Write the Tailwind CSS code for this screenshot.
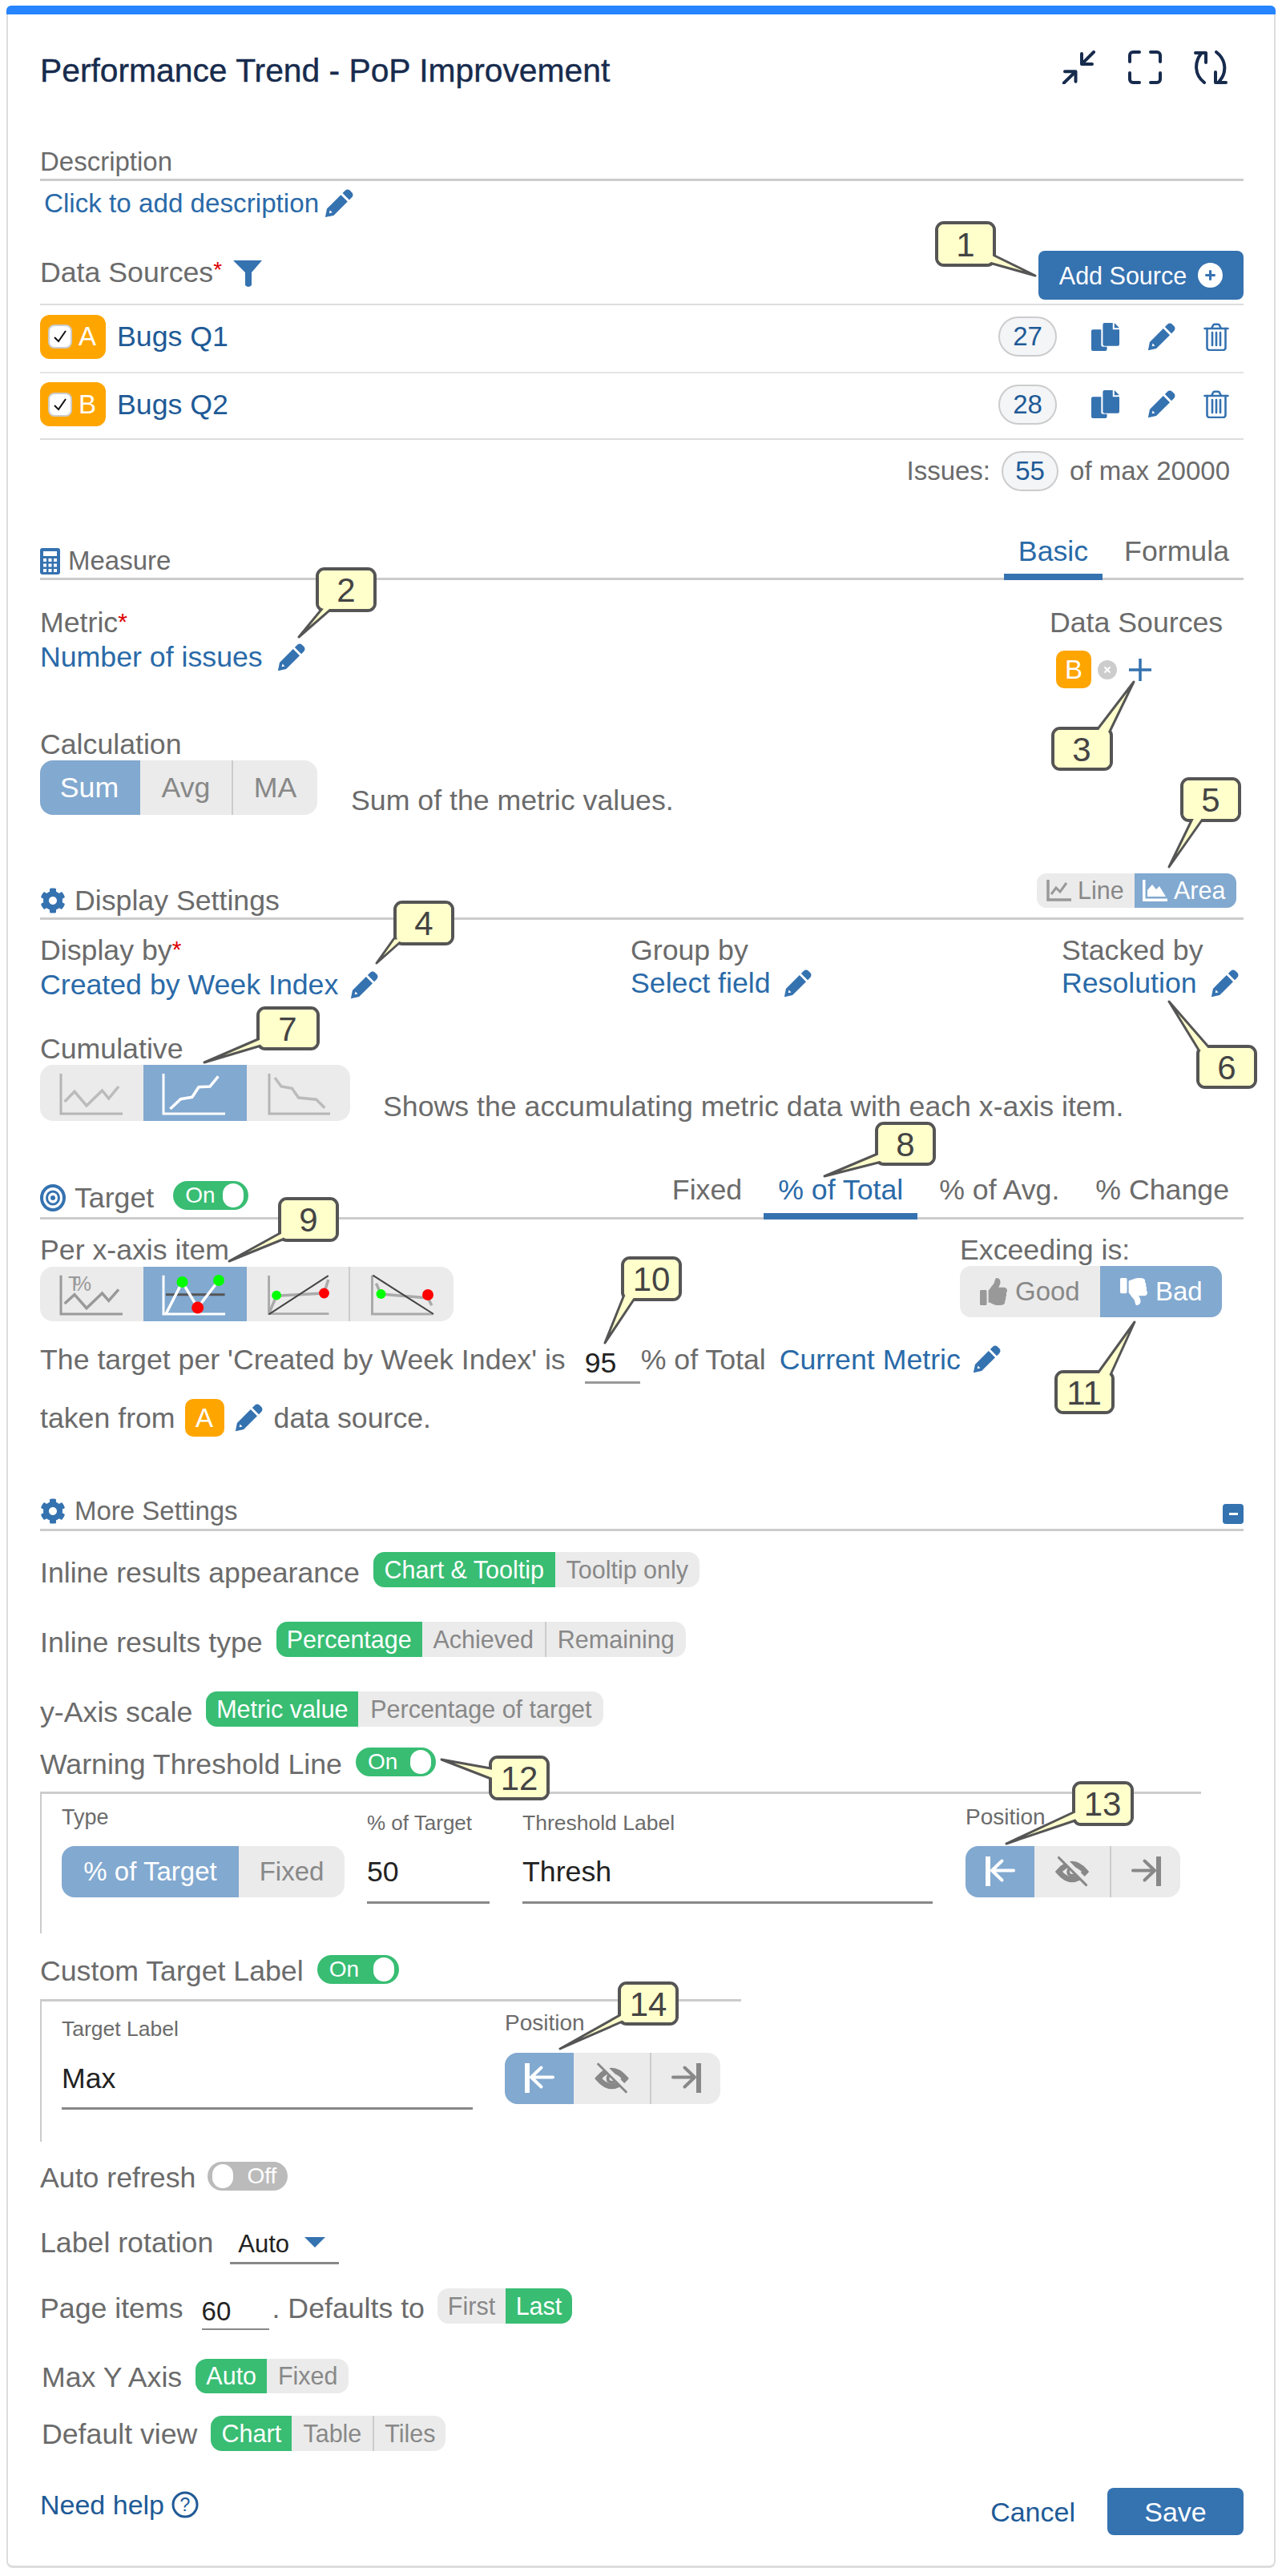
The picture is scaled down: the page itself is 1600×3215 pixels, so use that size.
<!DOCTYPE html>
<html>
<head>
    <title>Performance Trend - PoP Improvement</title>
    <script src="https://cdn.jsdelivr.net/npm/@tailwindcss/browser@4"></script>
</head>
<body class="bg-white [font-family:'Liberation_Sans',Arial,sans-serif] text-[35.7px] leading-[36px] text-[#6b6b6b]">

<!-- shared icons -->
<svg class="hidden">
    <symbol id="pencil" viewBox="0 0 24 24"><path d="M17.2 1.2a2.8 2.8 0 0 1 4 0l1.6 1.6a2.8 2.8 0 0 1 0 4l-2.2 2.2-5.6-5.6z"/><path fill-rule="evenodd" d="M13.6 4.8l5.6 5.6L7.6 22 .6 23.4 2 16.4zM3.9 20.1l2.6-.6-2-2z"/></symbol>
    <symbol id="copy" viewBox="0 0 34 34"><path d="M2 8h10v19a2 2 0 0 0 2 2h5v3a2 2 0 0 1-2 2H2a2 2 0 0 1-2-2V10a2 2 0 0 1 2-2z"/><path d="M16 0h10v8h8v18a2 2 0 0 1-2 2H16a2 2 0 0 1-2-2V2a2 2 0 0 1 2-2z"/><path d="M28 0l6 6h-6z"/></symbol>
    <symbol id="trash" viewBox="0 0 32 35"><g fill="none" stroke="currentColor" stroke-width="2.6" stroke-linecap="round"><path d="M1.5 7h29M10 7l2-4a2 2 0 0 1 2-1.300h4a2 2 0 0 1 2 1.300l2 4"/><path d="M4.500 7v24a3 3 0 0 0 3 3h17a3 3 0 0 0 3-3V7"/><path d="M11 12v16M16 12v16M21 12v16"/></g></symbol>
    <symbol id="cog" viewBox="0 0 512 512"><path d="M487.400 315.700l-42.600-24.600c4.300-23.200 4.300-47 0-70.200l42.600-24.600c4.900-2.800 7.100-8.600 5.500-14-11.100-35.600-30-67.800-54.700-94.600-3.800-4.100-10-5.100-14.800-2.300L380.800 110c-17.900-15.400-38.500-27.300-60.800-35.100V25.800c0-5.600-3.900-10.500-9.400-11.700-36.700-8.200-74.300-7.800-109.200 0-5.500 1.200-9.400 6.100-9.400 11.700V75c-22.200 7.900-42.800 19.800-60.800 35.100L88.700 85.500c-4.900-2.800-11-1.900-14.800 2.300-24.700 26.700-43.600 58.900-54.700 94.600-1.700 5.400.6 11.200 5.500 14L67.300 221c-4.300 23.200-4.300 47 0 70.200l-42.600 24.600c-4.900 2.800-7.100 8.600-5.500 14 11.100 35.600 30 67.800 54.700 94.600 3.800 4.100 10 5.100 14.800 2.300l42.600-24.600c17.900 15.400 38.500 27.300 60.800 35.100v49.200c0 5.600 3.900 10.500 9.400 11.700 36.700 8.200 74.300 7.800 109.200 0 5.500-1.200 9.400-6.100 9.400-11.700v-49.200c22.200-7.900 42.800-19.800 60.800-35.100l42.600 24.600c4.900 2.800 11 1.900 14.800-2.300 24.700-26.700 43.600-58.900 54.700-94.600 1.500-5.500-.7-11.300-5.600-14.100zM256 336c-44.100 0-80-35.900-80-80s35.900-80 80-80 80 35.900 80 80-35.900 80-80 80z"/></symbol>
    <symbol id="thumb" viewBox="0 0 512 512"><path d="M104 224H24c-13.255 0-24 10.745-24 24v240c0 13.255 10.745 24 24 24h80c13.255 0 24-10.745 24-24V248c0-13.255-10.745-24-24-24zM384 81.452c0 42.416-25.970 66.208-33.277 94.548h101.723c33.397 0 59.397 27.746 59.553 58.098.084 17.938-7.546 37.249-19.439 49.197l-.11.11c9.836 23.337 8.237 56.037-9.308 79.469 8.681 25.895-.069 57.704-16.382 74.757 4.298 17.598 2.244 32.575-6.148 44.632C440.202 511.587 389.616 512 346.839 512l-2.845-.001c-48.287-.017-87.806-17.598-119.560-31.725-15.957-7.099-36.821-15.887-52.651-16.178-6.540-.12-11.783-5.457-11.783-11.998v-213.770c0-3.200 1.282-6.271 3.558-8.521 39.614-39.144 56.648-80.587 89.117-113.111 14.804-14.832 20.188-37.236 25.393-58.902C282.515 39.293 291.817 0 312 0c24 0 72 8 72 81.452z"/></symbol>
    <symbol id="pos-left" viewBox="0 0 86 64"><path d="M28 13v37" stroke-width="6"/><path d="M60 30.500H33M45.500 18.500L33 30.500l12.500 12" stroke-width="4" stroke-linecap="round" stroke-linejoin="round" fill="none"/></symbol>
    <symbol id="pos-eye" viewBox="0 0 96 64"><path d="M31 32Q48 12 65 32 48 52 31 32Z" fill="none" stroke-width="7"/><circle cx="48" cy="32" r="5" stroke-width="4" fill="none"/><path d="M33 12l35 35" stroke="#ebebeb" stroke-width="7"/><path d="M31 14l35 35" stroke-width="3" stroke-linecap="round"/></symbol>
    <symbol id="pos-right" viewBox="0 0 86 64"><path d="M59 13v37" stroke-width="6"/><path d="M27 30.500h27M41.500 18.500L54 30.500l-12.500 12" stroke-width="4" stroke-linecap="round" stroke-linejoin="round" fill="none"/></symbol>
</svg>

<div class="relative ml-2 mt-[7px] w-[1584px] h-[3198px] rounded-[8px] border-x-2 border-b-[3px] border-[#ddd]">
    <div class="h-[11px] -mx-[2px] rounded-t-[6px] bg-[#2684ff]"></div>

    <div class="pl-[40px] pr-[38px]">
        <!-- Header -->
        <div class="flex h-[140px] items-center justify-between">
            <h1 class="text-[40.8px] leading-[48px] text-[#172b4d] [-webkit-text-stroke:0.4px_#172b4d]">Performance Trend - PoP Improvement</h1>
            <div class="mb-2 mr-[20px] flex gap-[40px] text-[#172b4d]">
                <svg class="h-[42px] w-[42px]" viewBox="0 0 42 42" fill="none" stroke="currentColor" stroke-width="4" stroke-linecap="round" stroke-linejoin="round"><path d="M39 2L25.600 15.300M24 4v13h13M1.300 41L15.700 27M3 26.300h13.500v12.400"/></svg>
                <svg class="h-[42px] w-[42px]" viewBox="0 0 42 42" fill="none" stroke="currentColor" stroke-width="4" stroke-linecap="round" stroke-linejoin="round"><path d="M2 14V6a4 4 0 0 1 4-4h8M28 2h8a4 4 0 0 1 4 4v8M40 28v8a4 4 0 0 1-4 4h-8M14 40H6a4 4 0 0 1-4-4v-8"/></svg>
                <svg class="h-[42px] w-[42px]" viewBox="0 0 42 42" fill="none" stroke="currentColor" stroke-width="4" stroke-linecap="round" stroke-linejoin="round"><path d="M13 40C0 30 1 14 9 4M2 3h13v12M28 2c13 10 13 26 4 36M27 27v13h13"/></svg>
            </div>
        </div>

        <!-- Description -->
        <div class="flex h-[68px] items-end border-b-[3px] border-[#ccc] text-[33px] leading-[42px]">Description</div>
        <div class="flex h-[56px] items-center gap-[7px] pl-[5px] text-[33.200px] text-[#2a6aa8]">
            <span>Click to add description</span>
            <svg class="h-[36px] w-[36px] fill-[#3572b0]"><use href="#pencil"/></svg>
        </div>

        <!-- Data sources -->
        <div class="flex h-[99px] items-end justify-between border-b-2 border-[#ddd] pb-[5px]">
            <div class="mb-[13px] flex items-center gap-[14px]">
                <span>Data Sources<span class="relative -top-[6px] text-[#d00] text-[28px]">*</span></span>
                <svg class="h-[34px] w-[36px] fill-[#3572b0]" viewBox="0 0 36 34"><path d="M0 0h36L23 15v16q-4 4-8 0V15z"/></svg>
            </div>
            <button class="flex h-[61px] w-[256px] items-center justify-center gap-[14px] rounded-[8px] bg-[#3572b0] text-[30.500px] text-white">
                Add Source
                <svg class="h-[31px] w-[31px]" viewBox="0 0 30 30"><circle cx="15" cy="15" r="15" fill="#fff"/><path d="M15 9v12M9 15h12" stroke="#3572b0" stroke-width="3"/></svg>
            </button>
        </div>
        <div class="flex h-[85px] items-center border-b-2 border-[#e5e5e5] pb-[5px]">
            <div class="flex h-[55px] w-[82px] items-center gap-[8px] rounded-[12px] bg-[#ffa500] pl-[10px] text-[33px] text-white">
                <span class="flex h-[30px] w-[30px] items-center justify-center rounded-[8px] border-2 border-[#ccc] bg-white"><svg class="h-[20px] w-[20px]" viewBox="0 0 20 20" fill="none" stroke="#111" stroke-width="2"><path d="M3 11l5 5 9-13"/></svg></span>A
            </div>
            <span class="ml-[14px] text-[#205a96]">Bugs Q1</span>
            <span class="ml-auto flex h-[50px] w-[73px] items-center justify-center rounded-full border-2 border-[#ccc] bg-[#f4f5f7] text-[33px] text-[#205a96]">27</span>
            <svg class="ml-[43px] h-[35px] w-[35px] fill-[#3572b0]"><use href="#copy"/></svg>
            <svg class="ml-[35px] h-[35px] w-[35px] fill-[#3572b0]"><use href="#pencil"/></svg>
            <svg class="ml-[35px] mr-[18px] h-[35px] w-[32px] text-[#3572b0]"><use href="#trash"/></svg>
        </div>
        <div class="flex h-[83px] items-center border-b-2 border-[#ddd] pb-[4px]">
            <div class="flex h-[55px] w-[82px] items-center gap-[8px] rounded-[12px] bg-[#ffa500] pl-[10px] text-[33px] text-white">
                <span class="flex h-[30px] w-[30px] items-center justify-center rounded-[8px] border-2 border-[#ccc] bg-white"><svg class="h-[20px] w-[20px]" viewBox="0 0 20 20" fill="none" stroke="#111" stroke-width="2"><path d="M3 11l5 5 9-13"/></svg></span>B
            </div>
            <span class="ml-[14px] text-[#205a96]">Bugs Q2</span>
            <span class="ml-auto flex h-[50px] w-[73px] items-center justify-center rounded-full border-2 border-[#ccc] bg-[#f4f5f7] text-[33px] text-[#205a96]">28</span>
            <svg class="ml-[43px] h-[35px] w-[35px] fill-[#3572b0]"><use href="#copy"/></svg>
            <svg class="ml-[35px] h-[35px] w-[35px] fill-[#3572b0]"><use href="#pencil"/></svg>
            <svg class="ml-[35px] mr-[18px] h-[35px] w-[32px] text-[#3572b0]"><use href="#trash"/></svg>
        </div>
        <div class="flex h-[78px] items-center justify-end pr-[17px] text-[33px]">
            Issues:
            <span class="mx-[14px] flex h-[50px] w-[71px] items-center justify-center rounded-full border-2 border-[#ccc] bg-[#f4f5f7] text-[#205a96]">55</span>
            of max 20000
        </div>

        <!-- Measure -->
        <div class="flex h-[97px] items-end justify-between border-b-[3px] border-[#ccc]">
            <div class="mb-[3px] flex items-center gap-[10px] text-[33px]">
                <svg class="h-[33px] w-[25px]" viewBox="0 0 25 33"><rect width="25" height="33" rx="3" fill="#3572b0"/><rect x="4" y="4" width="17" height="6" fill="#fff"/><path d="M4 13h4v4H4zM10.500 13h4v4h-4zM17 13h4v4h-4zM4 19.500h4v4H4zM10.500 19.500h4v4h-4zM17 19.500h4v4h-4zM4 26h4v4H4zM10.500 26h4v4h-4zM17 26h4v4h-4z" fill="#fff"/></svg>
                Measure
            </div>
            <div class="-mb-[3px] flex gap-[9px]">
                <span class="h-[56px] border-b-8 border-[#3572b0] px-[18px] leading-[40px] text-[#2a6aa8]">Basic</span>
                <span class="h-[56px] px-[18px] leading-[40px]">Formula</span>
            </div>
        </div>
        <div class="flex h-[187px] justify-between pt-[35px]">
            <div>
                <div>Metric<span class="relative -top-[3px] text-[30px] text-[#d00]">*</span></div>
                <div class="mt-[5px] flex items-center gap-[18px] text-[#2a6aa8]">Number of issues <svg class="h-[35px] w-[35px] fill-[#3572b0]"><use href="#pencil"/></svg></div>
            </div>
            <div class="w-[242px]">
                <div>Data Sources</div>
                <div class="mt-[17px] flex items-center pl-[8px]">
                    <span class="flex h-[47px] w-[44px] items-center justify-center rounded-[10px] bg-[#ffa500] text-[33px] text-white">B</span>
                    <svg class="ml-[8px] h-[24px] w-[24px]" viewBox="0 0 24 24"><circle cx="12" cy="12" r="12" fill="#ccc"/><path d="M8.500 8.500l7 7M15.500 8.500l-7 7" stroke="#fff" stroke-width="2"/></svg>
                    <svg class="ml-[14px] h-[30px] w-[30px]" viewBox="0 0 30 30"><path d="M15 1v28M1 15h28" stroke="#3572b0" stroke-width="3.500"/></svg>
                </div>
            </div>
        </div>
        <div class="h-[38px]">Calculation</div>
        <div class="flex items-end">
            <div class="flex h-[68px] overflow-hidden rounded-[16px] bg-[#ebebeb] leading-[68px] text-[#888]">
                <span class="w-[125px] bg-[#82a9d0] pr-[2px] text-center text-white">Sum</span>
                <span class="w-[116px] border-r-2 border-[#ccc] text-center">Avg</span>
                <span class="w-[105px] text-center">MA</span>
            </div>
            <span class="ml-[42px]">Sum of the metric values.</span>
        </div>

        <!-- Display settings -->
        <div class="flex h-[131px] items-end justify-between border-b-[3px] border-[#ccc]">
            <div class="mb-[3px] flex items-center gap-[11px]">
                <svg class="h-[34px] w-[32px] fill-[#3572b0]"><use href="#cog"/></svg>
                Display Settings
            </div>
            <div class="mb-[12px] mr-[9px] flex h-[43px] overflow-hidden rounded-[12px] bg-[#ebebeb] text-[30.500px] leading-[43px] text-[#888]">
                <span class="flex w-[122px] items-center gap-[8px] pl-[12px]">
                    <svg class="h-[27px] w-[31px]" viewBox="0 0 31 27" fill="none" stroke="#999"><path d="M2 0v25h29" stroke-width="3.500"/><path d="M6 18l6-8 5 5 8-11" stroke-width="3"/></svg>Line
                </span>
                <span class="flex w-[127px] items-center gap-[8px] bg-[#82a9d0] pl-[10px] text-white">
                    <svg class="h-[27px] w-[31px]" viewBox="0 0 31 27" fill="#fff"><path d="M0 0h3.500v23.500H31V27H0z"/><path d="M6 21V13l6-7 5 6 4-4 8 13z"/></svg>Area
                </span>
            </div>
        </div>
        <div class="grid h-[143px] grid-cols-[737px_538px_1fr] pt-[20px]">
            <div>
                <div>Display by<span class="relative -top-[3px] text-[30px] text-[#d00]">*</span></div>
                <div class="mt-[5px] flex items-center gap-[15px] text-[#2a6aa8]">Created by Week Index <svg class="h-[35px] w-[35px] fill-[#3572b0]"><use href="#pencil"/></svg></div>
            </div>
            <div>
                <div>Group by</div>
                <div class="mt-[5px] flex items-center gap-[16px] text-[#2a6aa8]">Select field <svg class="h-[35px] w-[35px] fill-[#3572b0]"><use href="#pencil"/></svg></div>
            </div>
            <div>
                <div>Stacked by</div>
                <div class="mt-[5px] flex items-center gap-[17px] text-[#2a6aa8]">Resolution <svg class="h-[35px] w-[35px] fill-[#3572b0]"><use href="#pencil"/></svg></div>
            </div>
        </div>
        <div class="h-[38px]">Cumulative</div>
        <div class="flex items-end">
            <div class="flex h-[70px] overflow-hidden rounded-[16px] bg-[#ebebeb]">
                <svg class="h-[70px] w-[129px]" viewBox="0 0 129 70" fill="none" stroke="#bbb" stroke-width="3"><path d="M26 11v50h77" stroke="#b5b5b5"/><path d="M30.600 46L43 33.300 58 51 77.500 32 85.700 42 98 27" stroke-width="3.500"/></svg>
                <svg class="h-[70px] w-[129px] bg-[#82a9d0]" viewBox="0 0 129 70" fill="none" stroke="#fff" stroke-width="3"><path d="M25 11v50h77"/><path d="M33.400 55L46.500 42.700 60.800 40.300 69 27.700 83 27 93.400 14.300" stroke-width="3.500"/></svg>
                <svg class="h-[70px] w-[129px]" viewBox="0 0 129 70" fill="none" stroke="#bbb" stroke-width="3"><path d="M28 11v50h76" stroke="#b5b5b5"/><path d="M35 16L43 27 56.400 29.300 64.600 41 86.700 43.300 97.300 53.700" stroke-width="3.500"/></svg>
            </div>
            <span class="ml-[41px]">Shows the accumulating metric data with each x-axis item.</span>
        </div>

        <!-- Target -->
        <div class="flex h-[123px] items-end justify-between border-b-[3px] border-[#ccc]">
            <div class="mb-[4px] flex items-center">
                <svg class="h-[34px] w-[32px]" viewBox="0 0 32 34" fill="none" stroke="#3572b0"><ellipse cx="16" cy="17" rx="14" ry="15" stroke-width="4"/><ellipse cx="16" cy="17" rx="7.500" ry="8" stroke-width="3"/><circle cx="16" cy="17" r="3" fill="#3572b0" stroke="none"/></svg>
                <span class="ml-[11px]">Target</span>
                <span class="relative mb-[5px] ml-[24px] flex h-[36px] w-[94px] items-center rounded-full bg-[#38bd73] pl-[15px] text-[28px] text-white">On<span class="absolute right-[6px] top-[3px] h-[30px] w-[26px] rounded-full bg-white"></span></span>
            </div>
            <div class="-mb-[3px] flex gap-[9px]">
                <span class="h-[55px] px-[18px]">Fixed</span>
                <span class="h-[55px] border-b-8 border-[#3572b0] px-[18px] text-[#2a6aa8]">% of Total</span>
                <span class="h-[55px] px-[18px]">% of Avg.</span>
                <span class="h-[55px] px-[18px]">% Change</span>
            </div>
        </div>
        <div class="flex justify-between pt-[20px] pr-[27px]">
            <div>
                <div>Per x-axis item</div>
                <div class="mt-[3px] flex h-[68px] overflow-hidden rounded-[16px] bg-[#ebebeb]">
                    <svg class="h-[68px] w-[129px]" viewBox="0 0 129 68" fill="none" stroke="#999" stroke-width="3"><path d="M26 10.700V59h77"/><text x="35" y="30" font-size="25" fill="#999" stroke="none" textLength="29" font-family="Liberation Sans">T%</text><path d="M30.600 46L43 34.700 58 51.700 77.500 33 85.700 42.300 98 28.300" stroke-width="3.500"/></svg>
                    <svg class="h-[68px] w-[129px] bg-[#82a9d0]" viewBox="0 0 129 68" fill="none" stroke="#fff" stroke-width="3"><path d="M25 10.700V59h77"/><path d="M28 34.700h73.600" stroke="#555"/><path d="M28 59L48.500 19 67.700 51 94 17" stroke-width="3.500"/><circle cx="48.500" cy="19" r="7" fill="#0f0" stroke="none"/><circle cx="94" cy="17" r="7" fill="#0f0" stroke="none"/><circle cx="67.700" cy="51" r="7.500" fill="#f00" stroke="none"/></svg>
                    <svg class="h-[68px] w-[129px] border-r-2 border-[#ccc]" viewBox="0 0 129 68" fill="none" stroke="#aaa" stroke-width="3"><path d="M28 10.700V59h76"/><path d="M28.700 57.300L37.700 36.300 98 33 103.400 15.700" stroke-width="3.500"/><path d="M28 59.700L103.400 10.700" stroke="#444" stroke-width="2"/><circle cx="37.700" cy="35.700" r="6" fill="#0f0" stroke="none"/><circle cx="98" cy="33" r="6.500" fill="#f00" stroke="none"/></svg>
                    <svg class="h-[68px] w-[129px]" viewBox="0 0 129 68" fill="none" stroke="#aaa" stroke-width="3"><path d="M27.500 10.700V59h76"/><path d="M32.400 20.700L38.500 34 97 39 101.800 48.300" stroke-width="3.500"/><path d="M28.300 10.700L104 59" stroke="#444" stroke-width="2"/><circle cx="38.500" cy="34" r="6" fill="#0f0" stroke="none"/><circle cx="97" cy="35" r="7" fill="#f00" stroke="none"/></svg>
                </div>
            </div>
            <div class="w-[327px]">
                <div>Exceeding is:</div>
                <div class="mt-[2px] flex h-[64px] overflow-hidden rounded-[14px] bg-[#ebebeb] text-[33px] text-[#888]">
                    <span class="flex w-[175px] items-center gap-[10px] pl-[25px]"><svg class="h-[34px] w-[34px] fill-[#999]"><use href="#thumb"/></svg>Good</span>
                    <span class="flex w-[152px] items-center gap-[10px] bg-[#82a9d0] pl-[25px] text-white"><svg class="h-[34px] w-[34px] -scale-y-100 fill-white"><use href="#thumb"/></svg>Bad</span>
                </div>
            </div>
        </div>
        <div class="flex h-[97px] items-start pt-[30px]">
            <span>The target per 'Created by Week Index' is</span>
            <input value="95" class="ml-[24px] h-[48px] w-[69px] border-b-[3px] border-[#999] leading-[44px] text-[#222] outline-none">
            <span class="ml-[1px]">% of Total</span>
            <span class="ml-[17px] text-[#2a6aa8]">Current Metric</span>
            <svg class="ml-[15px] h-[35px] w-[35px] fill-[#3572b0]"><use href="#pencil"/></svg>
        </div>
        <div class="flex h-[47px] items-center">
            <span>taken from</span>
            <span class="ml-[12px] flex h-[47px] w-[49px] items-center justify-center rounded-[10px] bg-[#ffa500] text-[33px] text-white">A</span>
            <svg class="ml-[13px] h-[35px] w-[35px] fill-[#3572b0]"><use href="#pencil"/></svg>
            <span class="ml-[14px]">data source.</span>
        </div>

        <!-- More settings -->
        <div class="flex h-[118px] items-end justify-between border-b-[3px] border-[#ccc]">
            <div class="mb-[4px] flex items-center gap-[11px] text-[33px]">
                <svg class="h-[34px] w-[32px] fill-[#3572b0]"><use href="#cog"/></svg>
                More Settings
            </div>
            <span class="mb-[6px] flex h-[25px] w-[26px] items-center justify-center rounded-[4px] bg-[#3572b0]"><span class="h-[3px] w-[11px] bg-white"></span></span>
        </div>
        <div class="mt-[26px] flex items-end gap-[17px]">
            <span>Inline results appearance</span>
            <div class="flex h-[44px] overflow-hidden rounded-[14px] bg-[#ebebeb] text-[30.500px] leading-[44px] text-[#888]">
                <span class="w-[227px] bg-[#38bd73] text-center text-white">Chart &amp; Tooltip</span>
                <span class="w-[180px] text-center">Tooltip only</span>
            </div>
        </div>
        <div class="mt-[43px] flex items-end gap-[17px]">
            <span>Inline results type</span>
            <div class="flex h-[44px] overflow-hidden rounded-[14px] bg-[#ebebeb] text-[30.500px] leading-[44px] text-[#888]">
                <span class="w-[182px] bg-[#38bd73] text-center text-white">Percentage</span>
                <span class="w-[155px] border-r-2 border-[#ccc] text-center">Achieved</span>
                <span class="w-[174px] text-center">Remaining</span>
            </div>
        </div>
        <div class="mt-[43px] flex items-end gap-[17px]">
            <span>y-Axis scale</span>
            <div class="flex h-[44px] overflow-hidden rounded-[14px] bg-[#ebebeb] text-[30.500px] leading-[44px] text-[#888]">
                <span class="w-[190px] bg-[#38bd73] text-center text-white">Metric value</span>
                <span class="w-[306px] text-center">Percentage of target</span>
            </div>
        </div>

        <!-- Warning threshold -->
        <div class="mt-[26px] flex h-[55px] items-start gap-[17px]">
            <span class="mt-[3px]">Warning Threshold Line</span>
            <span class="relative flex h-[36px] w-[100px] items-center rounded-full bg-[#38bd73] pl-[15px] text-[28px] text-white">On<span class="absolute right-[6px] top-[3px] h-[30px] w-[26px] rounded-full bg-white"></span></span>
        </div>
        <div class="flex h-[177px] w-[1449px] gap-[28px] border-l-2 border-t-[3px] border-[#ccc] pl-[25px]">
            <div class="w-[353px]">
                <div class="h-[65px] pt-[13px] text-[27px] leading-[32px]">Type</div>
                <div class="flex h-[64px] overflow-hidden rounded-[16px] bg-[#ebebeb] text-[33px] leading-[64px] text-[#888]">
                    <span class="w-[221px] bg-[#82a9d0] text-center text-white">% of Target</span>
                    <span class="w-[132px] text-center">Fixed</span>
                </div>
            </div>
            <div class="w-[153px]">
                <div class="h-[65px] pt-[20px] text-[26px] leading-[32px]">% of Target</div>
                <input value="50" class="h-[72px] w-full border-b-[3px] border-[#888] pb-[4px] leading-[64px] text-[#222] outline-none">
            </div>
            <div class="ml-[13px] w-[512px]">
                <div class="h-[65px] pt-[20px] text-[26.500px] leading-[32px]">Threshold Label</div>
                <input value="Thresh" class="h-[72px] w-full border-b-[3px] border-[#888] pb-[4px] leading-[64px] text-[#222] outline-none">
            </div>
            <div class="ml-[13px] w-[268px]">
                <div class="h-[65px] pt-[13px] text-[28px] leading-[32px]">Position</div>
                <div class="flex h-[64px] overflow-hidden rounded-[16px] bg-[#ebebeb]">
                    <svg class="h-[64px] w-[86px] bg-[#82a9d0] fill-white stroke-white"><use href="#pos-left"/></svg>
                    <svg class="h-[64px] w-[96px] border-r-2 border-[#ccc] fill-[#888] stroke-[#888]"><use href="#pos-eye"/></svg>
                    <svg class="h-[64px] w-[86px] fill-[#888] stroke-[#888]"><use href="#pos-right"/></svg>
                </div>
            </div>
        </div>

        <!-- Custom target label -->
        <div class="mt-[27px] flex h-[55px] items-start gap-[17px]">
            <span class="mt-[2px]">Custom Target Label</span>
            <span class="relative flex h-[36px] w-[102px] items-center rounded-full bg-[#38bd73] pl-[15px] text-[28px] text-white">On<span class="absolute right-[6px] top-[3px] h-[30px] w-[26px] rounded-full bg-white"></span></span>
        </div>
        <div class="flex h-[178px] w-[875px] gap-[40px] border-l-2 border-t-[3px] border-[#ccc] pl-[25px]">
            <div class="w-[513px]">
                <div class="h-[64px] pt-[18px] text-[26.500px] leading-[32px]">Target Label</div>
                <input value="Max" class="h-[71px] w-full border-b-[3px] border-[#888] pb-[3px] leading-[64px] text-[#222] outline-none">
            </div>
            <div class="w-[269px]">
                <div class="h-[64px] pt-[11px] text-[28px] leading-[32px]">Position</div>
                <div class="flex h-[64px] overflow-hidden rounded-[16px] bg-[#ebebeb]">
                    <svg class="h-[64px] w-[86px] bg-[#82a9d0] fill-white stroke-white"><use href="#pos-left"/></svg>
                    <svg class="h-[64px] w-[97px] border-r-2 border-[#ccc] fill-[#888] stroke-[#888]"><use href="#pos-eye"/></svg>
                    <svg class="h-[64px] w-[86px] fill-[#888] stroke-[#888]"><use href="#pos-right"/></svg>
                </div>
            </div>
        </div>

        <!-- Misc settings -->
        <div class="mt-[25px] flex items-start gap-[15px]">
            <span class="mt-[2px]">Auto refresh</span>
            <span class="relative flex h-[36px] w-[100px] items-center justify-end rounded-full bg-[#bbb] pr-[14px] text-[28px] text-white">Off<span class="absolute left-[6px] top-[3px] h-[30px] w-[26px] rounded-full bg-white"></span></span>
        </div>
        <div class="mt-[45px] flex items-start">
            <span>Label rotation</span>
            <div class="ml-[21px] flex h-[45px] w-[136px] items-start gap-[19px] border-b-[3px] border-[#888] pl-[10px] text-[31px] leading-[40px] text-[#222]">
                Auto
                <svg class="mt-[11px] h-[13px] w-[26px] fill-[#3572b0]" viewBox="0 0 26 13"><path d="M0 0h26L13 13z"/></svg>
            </div>
        </div>
        <div class="mt-[30px] flex h-[52px] items-start">
            <span class="mt-[7px]">Page items</span>
            <input value="60" class="ml-[23px] mt-[7px] h-[45px] w-[84px] border-b-2 border-[#888] text-[33px] leading-[40px] text-[#222] outline-none">
            <span class="ml-[4px] mt-[7px]">. Defaults to</span>
            <div class="ml-[16px] flex h-[44px] overflow-hidden rounded-[14px] bg-[#ebebeb] text-[30.500px] leading-[44px] text-[#888]">
                <span class="w-[85px] text-center">First</span>
                <span class="w-[83px] bg-[#38bd73] text-center text-white">Last</span>
            </div>
        </div>
        <div class="mt-[36px] flex h-[43px] items-center pl-[2px]">
            <span class="mt-[3px]">Max Y Axis</span>
            <div class="ml-[17px] flex h-[43px] overflow-hidden rounded-[14px] bg-[#ebebeb] text-[30.500px] leading-[43px] text-[#888]">
                <span class="w-[89px] bg-[#38bd73] text-center text-white">Auto</span>
                <span class="w-[102px] text-center">Fixed</span>
            </div>
        </div>
        <div class="mt-[28px] flex h-[44px] items-center pl-[2px]">
            <span class="mt-[2px]">Default view</span>
            <div class="ml-[17px] flex h-[44px] overflow-hidden rounded-[14px] bg-[#ebebeb] text-[30.500px] leading-[44px] text-[#888]">
                <span class="w-[101px] bg-[#38bd73] text-center text-white">Chart</span>
                <span class="w-[103px] border-r-2 border-[#ccc] text-center">Table</span>
                <span class="w-[89px] text-center">Tiles</span>
            </div>
        </div>

        <!-- Footer -->
        <div class="mt-[46px] flex items-start justify-between">
            <div class="mt-[3px] flex items-center gap-[9px] text-[34px] text-[#205a96]">
                Need help
                <svg class="h-[34px] w-[34px]" viewBox="0 0 34 34" fill="none" stroke="#205a96"><circle cx="17" cy="17" r="15" stroke-width="3"/><text x="17" y="25" font-size="23" text-anchor="middle" fill="#205a96" stroke="none" font-family="Liberation Sans">?</text></svg>
            </div>
            <div class="flex items-center gap-[40px]">
                <span class="text-[34px] text-[#205a96]">Cancel</span>
                <button class="h-[59px] w-[170px] rounded-[8px] bg-[#3572b0] text-[34px] text-white">Save</button>
            </div>
        </div>
    </div>
</div>

<!-- Numbered callouts over the form -->
<svg class="pointer-events-none absolute left-0 top-0 h-[3215px] w-[1600px]" viewBox="0 0 1600 3215" font-family="Liberation Sans" font-size="42" text-anchor="middle">
    <g fill="#ffffcc" stroke="#555" stroke-width="3" stroke-linejoin="round">
        <rect x="1169" y="278" width="72" height="53" rx="9" stroke-width="4"/><polygon points="1235,316 1292,344 1235,328"/><rect x="1171" y="280" width="68" height="49" rx="7" stroke="none"/>
        <rect x="396" y="710" width="72" height="52" rx="9" stroke-width="4"/><polygon points="405,756 373,795 418,756"/><rect x="398" y="712" width="68" height="48" rx="7" stroke="none"/>
        <rect x="1314" y="909" width="73" height="51" rx="9" stroke-width="4"/><polygon points="1366,915 1415,851 1384,915"/><rect x="1316" y="911" width="69" height="47" rx="7" stroke="none"/>
        <rect x="493" y="1126" width="72" height="52" rx="9" stroke-width="4"/><polygon points="492,1171 470,1202 505,1171"/><rect x="495" y="1128" width="68" height="48" rx="7" stroke="none"/>
        <rect x="1475" y="972" width="72" height="52" rx="9" stroke-width="4"/><polygon points="1490,1018 1459,1082 1504,1018"/><rect x="1477" y="974" width="68" height="48" rx="7" stroke="none"/>
        <rect x="1495" y="1306" width="72" height="51" rx="9" stroke-width="4"/><polygon points="1497,1312 1459,1250 1513,1312"/><rect x="1497" y="1308" width="68" height="47" rx="7" stroke="none"/>
        <rect x="322" y="1258" width="75" height="51" rx="9" stroke-width="4"/><polygon points="329,1294 255,1326 329,1304"/><rect x="324" y="1260" width="71" height="47" rx="7" stroke="none"/>
        <rect x="1094" y="1402" width="72" height="51" rx="9" stroke-width="4"/><polygon points="1100,1438 1029,1468 1100,1450"/><rect x="1096" y="1404" width="68" height="47" rx="7" stroke="none"/>
        <rect x="349" y="1496" width="72" height="52" rx="9" stroke-width="4"/><polygon points="355,1536 286,1574 355,1546"/><rect x="351" y="1498" width="68" height="48" rx="7" stroke="none"/>
        <rect x="777" y="1570" width="72" height="52" rx="9" stroke-width="4"/><polygon points="779,1616 755,1676 795,1616"/><rect x="779" y="1572" width="68" height="48" rx="7" stroke="none"/>
        <rect x="1318" y="1712" width="71" height="51" rx="9" stroke-width="4"/><polygon points="1367,1718 1416,1650 1385,1718"/><rect x="1320" y="1714" width="67" height="47" rx="7" stroke="none"/>
        <rect x="612" y="2193" width="72" height="52" rx="9" stroke-width="4"/><polygon points="618,2208 551,2196 618,2222"/><rect x="614" y="2195" width="68" height="48" rx="7" stroke="none"/>
        <rect x="1340" y="2225" width="73" height="52" rx="9" stroke-width="4"/><polygon points="1348,2258 1256,2301 1348,2270"/><rect x="1342" y="2227" width="69" height="48" rx="7" stroke="none"/>
        <rect x="773" y="2475" width="72" height="51" rx="9" stroke-width="4"/><polygon points="779,2512 699,2557 779,2522"/><rect x="775" y="2477" width="68" height="47" rx="7" stroke="none"/>
    </g>
    <g fill="#444">
        <text x="1205" y="320">1</text><text x="432" y="751">2</text><text x="1350" y="950">3</text><text x="529" y="1167">4</text>
        <text x="1511" y="1013">5</text><text x="1531" y="1347">6</text><text x="359" y="1299">7</text><text x="1130" y="1443">8</text>
        <text x="385" y="1537">9</text><text x="813" y="1611">10</text><text x="1353" y="1753">11</text><text x="648" y="2234">12</text>
        <text x="1376" y="2266">13</text><text x="809" y="2516">14</text>
    </g>
</svg>

</body>
</html>
